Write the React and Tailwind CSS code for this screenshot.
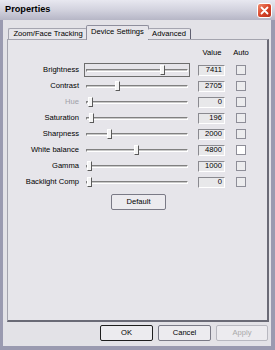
import React from 'react';

const rows = [
    { label: 'Brightness', value: '7411', pos: 75, focus: true },
    { label: 'Contrast', value: '2705', pos: 30 },
    { label: 'Hue', value: '0', pos: 3, disabled: true },
    { label: 'Saturation', value: '196', pos: 4 },
    { label: 'Sharpness', value: '2000', pos: 22 },
    { label: 'White balance', value: '4800', pos: 49, autoOn: true },
    { label: 'Gamma', value: '1000', pos: 2 },
    { label: 'Backlight Comp', value: '0', pos: 2 },
];

const font = { fontFamily: '"Liberation Sans", Arial, sans-serif' };

function Slider({ pos, focus }) {
    return (
        <div className={`relative w-[106px] h-[14px] flex items-center ${focus ? 'border border-[#6d6d6d]' : 'border border-transparent'}`}>
            <div className="mx-[1px] w-full h-[3px] border-t border-l border-[#808080] border-b border-b-white border-r border-r-white bg-[#c8c8c8]"></div>
            <div className="absolute top-[1px] w-[5px] h-[10px] bg-[#f4f4f4] border-l border-t border-white border-r border-b border-r-[#5a5a5a] border-b-[#5a5a5a]" style={{ left: pos }}></div>
        </div>
    );
}

function Btn({ children, primary, disabled, className = '' }) {
    return (
        <div className={`h-[16px] flex items-center justify-center text-[7.6px] rounded-[2px] bg-[#ecebef] ${primary ? 'border-[1.5px] border-[#1e1e1e]' : 'border border-[#7a7a86]'} ${disabled ? 'text-[#a9a9a9] border-[#b8b8c0]' : 'text-black'} ${className}`}>
            {children}
        </div>
    );
}

export default function App() {
    return (
        <div className="w-[275px] h-[350px] flex flex-col bg-[#9a9ab0] overflow-hidden" style={font}>
            {/* title bar */}
            <div className="h-[20px] flex items-center justify-between pl-[5px] pr-[3px] bg-gradient-to-b from-[#e8e8f0] via-[#d2d2de] to-[#b6b6c6]">
                <span className="text-[9.2px] font-bold text-black">Properties</span>
                <div className="w-[15px] h-[15px] rounded-[3px] border border-white bg-gradient-to-br from-[#f08a6c] via-[#d8452a] to-[#b8301c] flex items-center justify-center">
                    <svg width="9" height="9" viewBox="0 0 9 9"><path d="M1.5 1.5 L7.5 7.5 M7.5 1.5 L1.5 7.5" stroke="white" strokeWidth="1.8" strokeLinecap="round" /></svg>
                </div>
            </div>

            {/* body */}
            <div className="flex-1 mx-[3px] mr-[4px] mb-[4px] bg-[#e3e2e7] flex flex-col pt-[5px]">
                {/* tabs */}
                <div className="flex items-end h-[14px] pl-[5px] relative z-10">
                    <div className="w-[79px] h-[11px] flex items-center justify-center text-[7.6px] text-black bg-[#e6e5ea] border-t border-l border-[#a5a5b0] rounded-t-[2px]">Zoom/Face Tracking</div>
                    <div className="w-[63px] -mx-[1px] h-[15px] -mb-[1px] flex items-center justify-center text-[7.6px] text-black bg-[#e6e5ea] border-t border-l border-r border-[#8e8e9c] rounded-t-[2px] pb-[2px]">Device Settings</div>
                    <div className="w-[43px] h-[11px] flex items-center justify-center text-[7.6px] text-black bg-[#e6e5ea] border-t border-r border-[#a5a5b0] border-r-[#606070] rounded-t-[2px]">Advanced</div>
                </div>

                {/* panel */}
                <div className="ml-[4px] w-[262px] h-[283px] bg-[#e6e5ea] border border-[#a4a4ae] border-r-[#6a6a76] border-b-[#6a6a76] border-r-2 border-b-2 flex flex-col">
                    <div className="flex h-[10px] mt-[8px] text-[7.6px] text-black items-center">
                        <span className="ml-[190px] w-[28px] text-center">Value</span>
                        <span className="ml-[7px] w-[16px] text-center">Auto</span>
                    </div>
                    <div className="mt-[4px] flex flex-col">
                        {rows.map(r => (
                            <div key={r.label} className="h-[16px] flex items-center">
                                <span className={`w-[71px] text-right text-[7.6px] ${r.disabled ? 'text-[#a0a0a8]' : 'text-black'}`}>{r.label}</span>
                                <div className="ml-[5px]"><Slider pos={r.pos} focus={r.focus} /></div>
                                <div className="ml-[8px] w-[27px] h-[11px] flex items-center justify-end pr-[2px] text-[7.6px] text-black bg-[#e8e8ea] border border-[#8a8a90] border-b-white border-r-white">{r.value}</div>
                                <div className={`ml-[11px] w-[10px] h-[10px] border border-[#8e8e98] ${r.autoOn ? 'bg-white' : 'bg-[#ececee]'}`}></div>
                            </div>
                        ))}
                    </div>
                    <div className="mt-[4px] ml-[103px]">
                        <Btn className="w-[55px]">Default</Btn>
                    </div>
                </div>

                {/* bottom buttons */}
                <div className="mt-[3px] flex justify-end gap-[5px] pr-[3px]">
                    <Btn primary className="w-[53px]">OK</Btn>
                    <Btn className="w-[53px]">Cancel</Btn>
                    <Btn disabled className="w-[52px]">Apply</Btn>
                </div>
            </div>
        </div>
    );
}
